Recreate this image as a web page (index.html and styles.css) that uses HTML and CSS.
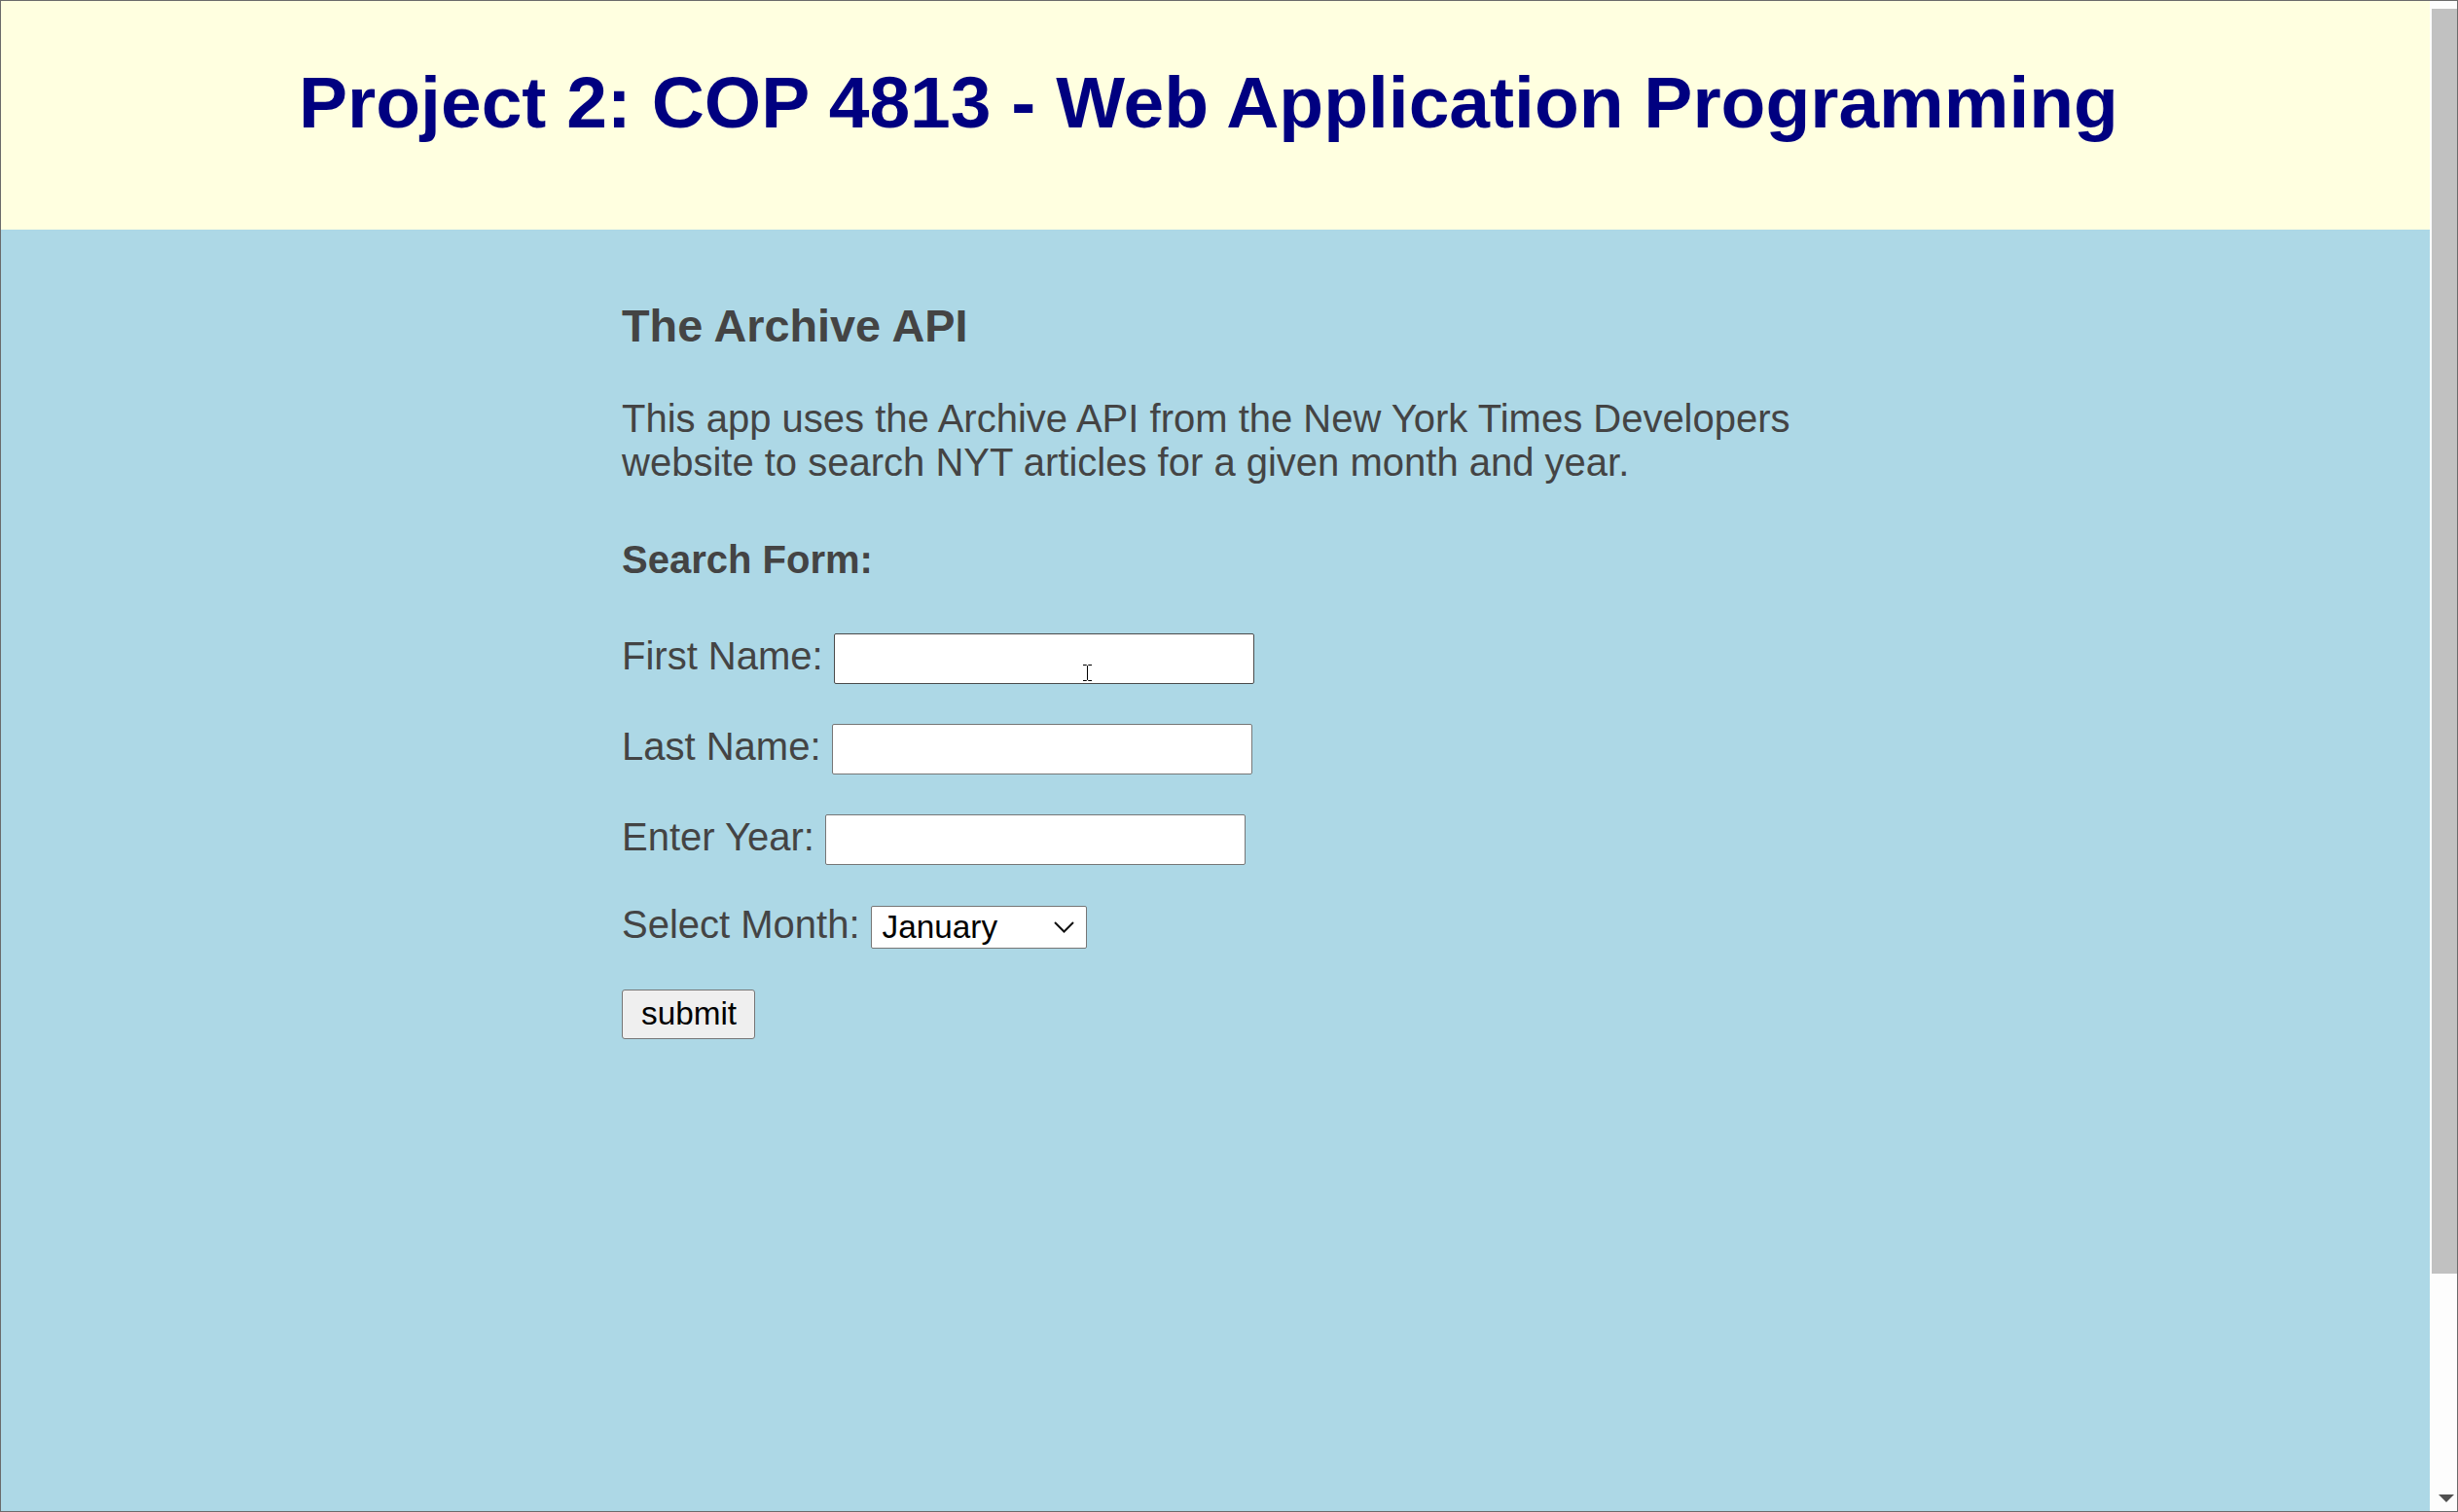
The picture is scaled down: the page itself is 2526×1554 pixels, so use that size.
FILE: index.html
```html
<!DOCTYPE html>
<html lang="en">
<head>
<meta charset="utf-8">
<title>Project 2: COP 4813 - Web Application Programming</title>
<link rel="stylesheet" href="styles.css">
</head>
<body>
<div class="window">
  <div class="viewport">
    <header class="banner">
      <h1 class="banner-title">Project 2: COP 4813 - Web Application Programming</h1>
    </header>
    <main class="content">
      <h3 class="section-title">The Archive API</h3>
      <p class="intro">This app uses the Archive API from the New York Times Developers website to search NYT articles for a given month and year.</p>
      <h4 class="form-title">Search Form:</h4>
      <form class="search-form">
        <div class="row">
          <label class="field-label" for="fname">First Name:</label>
          <span class="input-wrap">
            <input class="text-input is-hover" type="text" id="fname">
            <svg class="ibeam" width="11" height="17" viewBox="0 0 11 17"><path d="M1 0.5H4.5M6.5 0.5H10M4.5 0.5L5.5 1.5L6.5 0.5M5.5 1.5V15.5M1 16.5H4.5M6.5 16.5H10M4.5 16.5L5.5 15.5L6.5 16.5" stroke="#000" stroke-width="1" fill="none"/></svg>
          </span>
        </div>
        <div class="row">
          <label class="field-label" for="lname">Last Name:</label>
          <input class="text-input" type="text" id="lname">
        </div>
        <div class="row">
          <label class="field-label" for="year">Enter Year:</label>
          <input class="text-input" type="text" id="year">
        </div>
        <div class="row row-select">
          <label class="field-label" for="month">Select Month:</label>
          <span class="select-wrap">
            <select class="month-select" id="month">
              <option>January</option>
              <option>February</option>
              <option>March</option>
              <option>April</option>
              <option>May</option>
              <option>June</option>
              <option>July</option>
              <option>August</option>
              <option>September</option>
              <option>October</option>
              <option>November</option>
              <option>December</option>
            </select>
            <svg class="chevron" width="21" height="12" viewBox="0 0 21 12"><polyline points="1,1 10.5,10.5 20,1" stroke="#111" stroke-width="2" fill="none"/></svg>
          </span>
        </div>
        <div class="row row-button">
          <button class="submit-btn" type="button">submit</button>
        </div>
      </form>
    </main>
  </div>
  <div class="scrollbar">
    <div class="scroll-thumb"></div>
    <div class="scroll-arrow"></div>
  </div>
</div>
</body>
</html>
```

FILE: styles.css
```css
html, body {
  margin: 0;
  padding: 0;
}

body {
  font-family: "Liberation Sans", Arial, sans-serif;
  background: #ffffff;
}

.window {
  width: 2526px;
  height: 1554px;
  box-sizing: border-box;
  border: 1px solid #6b6b6b;
  display: flex;
  overflow: hidden;
}

.viewport {
  flex: 1;
  background: #add8e6;
  overflow: hidden;
}

.banner {
  height: 235px;
  box-sizing: border-box;
  padding: 61px 14px 0 0;
  background: #ffffe0;
}

.banner-title {
  margin: 0;
  font-size: 75px;
  font-weight: bold;
  line-height: normal;
  color: #000080;
  text-align: center;
}

.content {
  width: 1220px;
  margin: 0 auto;
  padding-top: 72px;
  color: #444444;
}

.section-title {
  margin: 0 0 46px;
  font-size: 46.8px;
  font-weight: bold;
  line-height: normal;
}

.intro {
  margin: 0 0 55px;
  font-size: 40px;
  line-height: normal;
}

.form-title {
  margin: 0 0 53px;
  font-size: 40px;
  font-weight: bold;
  line-height: normal;
}

.search-form {
  display: flex;
  flex-direction: column;
  align-items: flex-start;
}

.row {
  display: flex;
  align-items: baseline;
  gap: 11px;
}

.row + .row {
  margin-top: 41px;
}

.row.row-select {
  margin-top: 39px;
}

.row.row-button {
  margin-top: 42px;
}

.field-label {
  font-size: 40px;
  line-height: normal;
  color: #444444;
}

.input-wrap {
  position: relative;
  display: inline-flex;
}

.text-input {
  width: 432px;
  height: 52px;
  box-sizing: border-box;
  border: 1px solid #767676;
  border-radius: 2px;
  padding: 0 5px;
  margin: 0;
  background: #ffffff;
  font-family: "Liberation Sans", Arial, sans-serif;
  font-size: 33.3px;
  line-height: normal;
  outline: none;
}

.text-input.is-hover {
  border-color: #4a4a4a;
}

.ibeam {
  position: absolute;
  left: 255px;
  top: 32px;
}

.select-wrap {
  position: relative;
  display: inline-flex;
}

.month-select {
  appearance: none;
  -webkit-appearance: none;
  width: 222px;
  height: 44px;
  box-sizing: border-box;
  margin: 0;
  padding: 0 0 0 11px;
  border: 1px solid #767676;
  border-radius: 2px;
  background: #ffffff;
  color: #000000;
  font-family: "Liberation Sans", Arial, sans-serif;
  font-size: 33.3px;
  line-height: normal;
  outline: none;
}

.chevron {
  position: absolute;
  left: 188px;
  top: 16px;
  pointer-events: none;
}

.submit-btn {
  height: 51px;
  box-sizing: border-box;
  margin: 0;
  padding: 0 18px 0 19px;
  border: 1px solid #767676;
  border-radius: 3px;
  background: #efefef;
  color: #000000;
  font-family: "Liberation Sans", Arial, sans-serif;
  font-size: 33.3px;
  line-height: normal;
}

.scrollbar {
  width: 28px;
  flex: none;
  background: #fdfdfd;
  display: flex;
  flex-direction: column;
  justify-content: space-between;
}

.scroll-thumb {
  margin-top: 8px;
  margin-left: 2px;
  width: 26px;
  height: 1300px;
  background: #c1c1c1;
}

.scroll-arrow {
  margin-left: 9px;
  margin-bottom: 9px;
  width: 0;
  height: 0;
  border-left: 8px solid transparent;
  border-right: 8px solid transparent;
  border-top: 8px solid #505050;
}
```
